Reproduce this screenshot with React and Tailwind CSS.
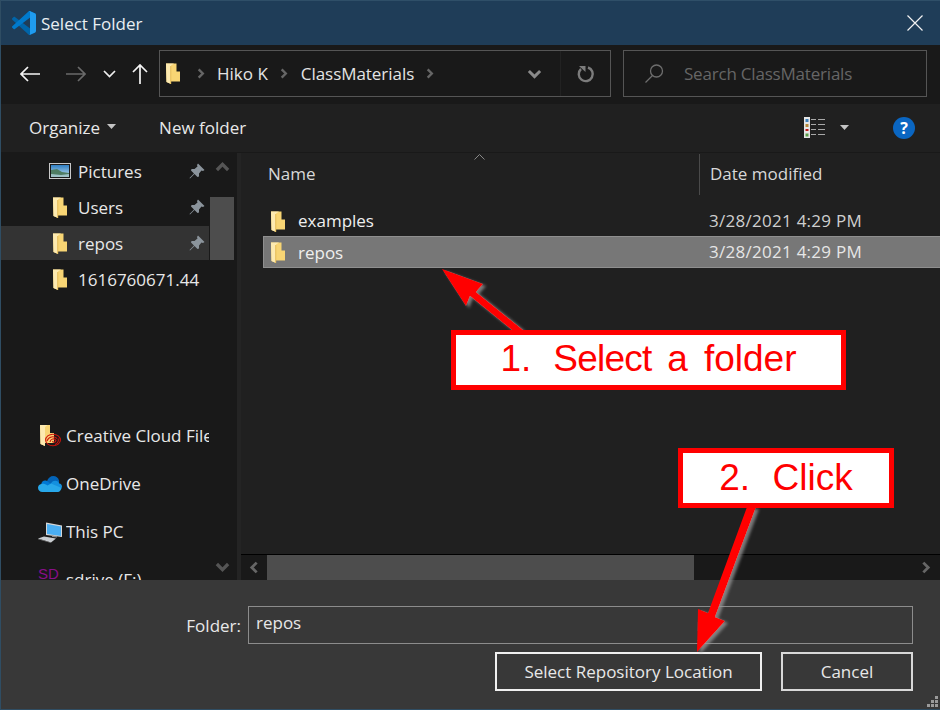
import React from "react";

const FONT = "font-['Open_Sans','Noto_Sans',sans-serif]";

const Folder = ({ className = "" }) => (
    <svg viewBox="0 0 14 21" className={`w-[14px] h-[21px] shrink-0 ${className}`}>
        <path d="M0 0.5H10.5V8.5H14V18.5H5V21L0.5 19Z" fill="#f8d574" />
        <path d="M0 0.5H8L5 2.5V21L0.5 19Z" fill="#fdeab0" />
        <path d="M4.3 3H5.2V21H4.3Z" fill="#e2b54a" />
    </svg>
);

const Pin = () => (
    <svg viewBox="0 0 16 16" className="w-4 h-4 shrink-0">
        <path d="M9 0.5 15.5 7 14 8 12.5 7.5 10 10.5 10 13.5 8.5 14 5.5 11 1 15.5 0.5 15 5 10.5 2 7.5 2.5 6 5.5 6 8.5 3.5 8 2Z" fill="#8b949c" />
    </svg>
);

const Chevron = ({ dir = "right", color = "#666", size = 12, stroke = 2.6 }) => {
    const d = {
        right: "M4 1.5 8.5 6 4 10.5",
        left: "M8 1.5 3.5 6 8 10.5",
        up: "M1.5 8 6 3.5 10.5 8",
        down: "M1.5 4 6 8.5 10.5 4",
    }[dir];
    return (
        <svg viewBox="0 0 12 12" style={{ width: size, height: size }} className="shrink-0">
            <path d={d} fill="none" stroke={color} strokeWidth={stroke} />
        </svg>
    );
};

const Caret = ({ color = "#c4c4c4" }) => (
    <svg viewBox="0 0 9 5" className="w-[9px] h-[5px] shrink-0">
        <path d="M0 0H9L4.5 5Z" fill={color} />
    </svg>
);

const VsCodeLogo = () => (
    <svg viewBox="0 0 100 100" className="w-6 h-6 shrink-0">
        <path d="M96.46 89.2 75.86 99.12C73.47 100.27 70.62 99.79 68.75 97.92L1.3 36.42C-.52 34.76-.51 31.91 1.3 30.25L6.81 25.25C8.3 23.9 10.53 23.8 12.13 25.01L93.36 86.63C96.09 88.7 100 86.75 100 83.33V83.57C100 85.97 98.62 88.16 96.46 89.2Z" fill="#0065a9" />
        <path d="M96.46 10.8 75.86.88C73.47-.27 70.62.21 68.75 2.08L1.3 63.58C-.52 65.24-.51 68.09 1.3 69.75L6.81 74.75C8.3 76.1 10.53 76.2 12.13 74.99L93.36 13.37C96.09 11.3 100 13.25 100 16.67V16.43C100 14.03 98.62 11.84 96.46 10.8Z" fill="#007acc" />
        <path d="M75.86 99.13C73.47 100.27 70.62 99.79 68.75 97.92 71.06 100.22 75 98.59 75 95.33V4.67C75 1.41 71.06-.22 68.75 2.08 70.62.21 73.47-.27 75.86.87L96.46 10.78C98.62 11.82 100 14.01 100 16.41V83.59C100 85.99 98.62 88.18 96.46 89.22Z" fill="#1f9cf0" />
    </svg>
);

const PicturesIcon = () => (
    <svg viewBox="0 0 22 16" className="w-[22px] h-4 shrink-0">
        <defs>
            <linearGradient id="sky" x1="0" y1="0" x2="0" y2="1">
                <stop offset="0" stopColor="#2f7fc4" />
                <stop offset="1" stopColor="#c6e2ee" />
            </linearGradient>
        </defs>
        <rect x="0.5" y="0.5" width="21" height="15" fill="#1b1b1b" stroke="#c9c9c9" />
        <rect x="2" y="2" width="18" height="12" fill="url(#sky)" />
        <path d="M2 7 8 6 13 9 20 10V14H2Z" fill="#4f7d63" />
        <path d="M2 11 12 12 20 11V14H2Z" fill="#9ec2c6" />
    </svg>
);

const CreativeCloudIcon = () => (
    <svg viewBox="0 0 21 22" className="w-[21px] h-[22px] shrink-0 ml-[2px]">
        <path d="M0 0H10V8H14V18H5V21L0.5 19Z" fill="#f8d574" />
        <path d="M0 0H7.5L5 2V21L0.5 19Z" fill="#fdeab0" />
        <g fill="none" stroke="#d0140c" strokeWidth="1.1">
            <ellipse cx="13" cy="15" rx="7.4" ry="5.8" />
            <path d="M7 16C8.5 11.5 14 10.5 17 13.5" />
            <path d="M10 17C10.5 13.5 14.5 13 16 15.5 15.8 17.5 13 18 12.5 16" />
            <path d="M18 13.5C19 15.5 18 18.5 15 19.5" />
        </g>
    </svg>
);

const OneDriveIcon = () => (
    <svg viewBox="0 0 24 16" className="w-6 h-4 shrink-0">
        <path d="M9 5.2C10 2 12.5 0 15.3 0 18 0 20.3 1.7 21 4.4L21.2 6.2 13 11 9 8.5Z" fill="#0364b8" />
        <path d="M9 5C6.3 3.6 3.4 5.3 3.3 8.1L8.5 14 14 9Z" fill="#0078d4" />
        <path d="M14.5 5.5C17 4 20.8 4.8 21.2 7.5 23 7.5 24 9 24 10.5 24 11 23.8 11.6 23.5 12L16 14 11.5 9Z" fill="#1490df" />
        <path d="M3.3 8C1.3 8.3 0 10 0 11.8 0 14.2 2 16 4.2 16H20C21.6 16 23 14.2 23.6 12L13 7.5 9.5 9.5C7.5 8 5.3 7.6 3.3 8Z" fill="#28a8ea" />
    </svg>
);

const ThisPcIcon = () => (
    <svg viewBox="0 0 24 21" className="w-6 h-[21px] shrink-0">
        <path d="M8 0.5 24 3.5V15L8 13Z" fill="#d6d6d6" />
        <path d="M9 2 23 4.5V14L9 12Z" fill="#4aaef2" />
        <path d="M14 13.5 19 14V15.5L14 15Z" fill="#8a8a8a" />
        <path d="M0 16.5 6 14.5 18 16.5 13 20.5Z" fill="#c9cdd1" />
        <path d="M0 16.5 13 20.5V21L0 17.3Z" fill="#777" />
    </svg>
);

const ViewIcon = () => (
    <svg viewBox="0 0 21 21" className="w-[21px] h-[21px] shrink-0">
        <rect x="0" y="0" width="6" height="21" fill="#e6e6e6" />
        <rect x="1.5" y="2" width="3" height="3" fill="#3d7fb8" />
        <rect x="1.5" y="7" width="3" height="3" fill="#b58a3a" />
        <rect x="1.5" y="12" width="3" height="2" fill="#c01818" />
        <rect x="1.5" y="16.5" width="3" height="3" fill="#5ca04a" />
        <g stroke="#a8a8a8">
            <path d="M7 2.5H12M14 2.5H21M7 7.5H12M14 7.5H21M7 12.5H12M14 12.5H21M7 17.5H12M14 17.5H21" />
        </g>
    </svg>
);

const NavRow = ({ icon, label, pinned, selected, className = "" }) => (
    <div className={`h-[34px] flex items-center shrink-0 pr-[4px] ${selected ? "bg-[#333333]" : ""} ${className}`}>
        <div className="w-[77px] flex justify-center pl-[45px] pr-[4px] items-center">{icon}</div>
        <span className="flex-1 mt-[2px] text-[#e8e8e8] whitespace-nowrap overflow-hidden">{label}</span>
        {pinned && <Pin />}
    </div>
);

const DriveRow = ({ icon, label, className = "" }) => (
    <div className={`h-[34px] flex items-center shrink-0 pl-[35px] ${className}`}>
        <div className="w-[30px] pl-[2px] flex items-center">{icon}</div>
        <span className="flex-1 text-[#e8e8e8] whitespace-nowrap overflow-hidden">{label}</span>
    </div>
);

const FileRow = ({ name, selected }) => (
    <div className={`h-[32px] flex items-center ml-[22px] ${selected ? "bg-[#777777] border border-[#8f8f8f] border-r-0" : ""}`}>
        <div className={selected ? "pl-[7px]" : "pl-[8px]"}>
            <Folder />
        </div>
        <span className={`ml-[13px] w-[411px] text-[#efefef] ${selected ? "mt-[2px]" : ""}`}>{name}</span>
        <span className={`tracking-[0.27px] ${selected ? "text-[#e6e6e6]" : "text-[#cfcfcf]"}`}>3/28/2021 4:29 PM</span>
    </div>
);

const Callout = ({ className = "", children }) => (
    <div className={`absolute bg-white border-[5px] border-[#ff0000] flex items-center justify-center text-[#ff0000] text-[37px] font-['Liberation_Sans',sans-serif] whitespace-pre leading-none ${className}`}>
        {children}
    </div>
);

export default function App() {
    return (
        <div className={`relative w-[940px] h-[710px] overflow-hidden flex flex-col bg-[#383838] border-l border-b border-[#2f4d63] text-[17px] ${FONT}`}>
            {/* title bar */}
            <div className="h-[45px] shrink-0 bg-[#1f3d58] border-t border-[#2f4f68] flex items-center pl-[11px] pr-[17px] text-[#e9eef2]">
                <VsCodeLogo />
                <span className="ml-[5px] mt-[2px] flex-1">Select Folder</span>
                <svg viewBox="0 0 16 16" className="w-4 h-4">
                    <path d="M0.5 0.5 15.5 15.5M15.5 0.5 0.5 15.5" stroke="#f2f2f2" strokeWidth="1.2" />
                </svg>
            </div>

            {/* address bar */}
            <div className="h-[59px] shrink-0 bg-[#191919] flex items-center pl-[19px] pr-[12px] pb-[2px]">
                <svg viewBox="0 0 20 16" className="w-5 h-4 shrink-0">
                    <path d="M8 1 1 8 8 15M1 8H20" fill="none" stroke="#f5f5f5" strokeWidth="1.7" />
                </svg>
                <svg viewBox="0 0 20 16" className="w-5 h-4 shrink-0 ml-[26px]">
                    <path d="M12 1 19 8 12 15M0 8H19" fill="none" stroke="#6a6a6a" strokeWidth="1.7" />
                </svg>
                <svg viewBox="0 0 13 8" className="w-[13px] h-2 shrink-0 ml-[17px]">
                    <path d="M1 1 6.5 6.5 12 1" fill="none" stroke="#eeeeee" strokeWidth="1.7" />
                </svg>
                <svg viewBox="0 0 16 20" className="w-4 h-5 shrink-0 ml-[16px]">
                    <path d="M1 8 8 1 15 8M8 1V20" fill="none" stroke="#f5f5f5" strokeWidth="1.7" />
                </svg>
                <div className="ml-[11px] w-[452px] h-[47px] border border-[#555555] flex items-center">
                    <Folder className="ml-[6px]" />
                    <div className="ml-[15px]"><Chevron color="#666666" size={11} /></div>
                    <span className="ml-[11px] text-[#e4e4e4]">Hiko K</span>
                    <div className="ml-[10px]"><Chevron color="#666666" size={11} /></div>
                    <span className="ml-[12px] text-[#e4e4e4] tracking-[-0.05px]">ClassMaterials</span>
                    <div className="ml-[10px]"><Chevron color="#666666" size={11} /></div>
                    <div className="ml-auto w-[50px] h-full flex items-center justify-center pr-[1px]">
                        <Chevron dir="down" color="#8a8a8a" size={15} stroke={2.4} />
                    </div>
                    <div className="w-[50px] h-full border-l border-[#222222] flex items-center justify-center">
                        <svg viewBox="0 0 18 18" className="w-[18px] h-[18px]">
                            <path d="M11 2.5A7 7 0 1 1 4 4" fill="none" stroke="#7c7c7c" strokeWidth="2.4" />
                            <path d="M3 1H9.5V7Z" fill="#7c7c7c" transform="translate(-1 0)" />
                        </svg>
                    </div>
                </div>
                <div className="ml-[12px] w-[304px] h-[47px] border border-[#555555] flex items-center">
                    <svg viewBox="0 0 19 19" className="w-[19px] h-[19px] ml-[21px]">
                        <circle cx="11.5" cy="7" r="6" fill="none" stroke="#6e6e6e" strokeWidth="1.3" />
                        <path d="M7.5 11.5 0.5 18.5" stroke="#6e6e6e" strokeWidth="1.3" />
                    </svg>
                    <span className="ml-[20px] text-[#666666] tracking-[-0.2px]">Search ClassMaterials</span>
                </div>
            </div>

            {/* toolbar */}
            <div className="h-[49px] shrink-0 bg-[#202020] border-b border-[#191919] flex items-center pl-[28px] pr-[25px] pb-[1px] text-[#e8e8e8]">
                <span>Organize</span>
                <div className="ml-[7px] mb-[2px]"><Caret /></div>
                <span className="ml-[43px]">New folder</span>
                <div className="ml-auto"><ViewIcon /></div>
                <div className="ml-[15px]"><Caret /></div>
                <div className="ml-[44px] w-[22px] h-[22px] rounded-full bg-[#0a66c2] text-white font-bold text-[16px] flex items-center justify-center leading-none">?</div>
            </div>

            {/* sidebar + file list */}
            <div className="h-[427px] shrink-0 flex overflow-hidden">
                <div className="w-[236px] shrink-0 bg-[#191919] flex overflow-hidden">
                    <div className="w-[208px] shrink-0 flex flex-col pt-[1px]">
                        <NavRow icon={<PicturesIcon />} label="Pictures" pinned className="mb-[2px]" />
                        <NavRow icon={<Folder />} label="Users" pinned className="mb-[2px]" />
                        <NavRow icon={<Folder />} label="repos" pinned selected className="mb-[2px]" />
                        <NavRow icon={<Folder />} label="1616760671.44" />
                        <DriveRow icon={<CreativeCloudIcon />} label="Creative Cloud Files" className="mt-[123px]" />
                        <DriveRow icon={<OneDriveIcon />} label="OneDrive" className="mt-[14px]" />
                        <DriveRow icon={<ThisPcIcon />} label="This PC" className="mt-[14px]" />
                        <DriveRow
                            icon={<span className="text-[#8a0f8a] text-[15px] leading-none font-['Liberation_Sans',sans-serif] -mt-[14px] block">SD</span>}
                            label="sdrive (F:)"
                            className="mt-[14px]"
                        />
                    </div>
                    <div className="w-[24px] ml-[1px] shrink-0 flex flex-col items-center">
                        <div className="h-[44px] pt-[7px] flex justify-center">
                            <Chevron dir="up" color="#555555" size={15} />
                        </div>
                        <div className="w-full h-[63px] bg-[#4d4d4d]" />
                        <div className="mt-auto h-[26px] pb-[2px] flex items-center justify-center">
                            <Chevron dir="down" color="#555555" size={15} />
                        </div>
                    </div>
                </div>
                <div className="w-[4px] shrink-0 bg-[#242424]" />
                <div className="flex-1 bg-[#202020] flex flex-col min-w-0">
                    <div className="h-[42px] shrink-0 relative flex items-center pl-[27px] text-[#d8d8d8]">
                        <span className="w-[431px]">Name</span>
                        <div className="w-px h-[41px] bg-[#4a4a4a]" />
                        <span className="ml-[10px]">Date modified</span>
                        <svg viewBox="0 0 11 6" className="absolute left-[233px] top-[1px] w-[11px] h-[6px]">
                            <path d="M0.5 5.5 5.5 0.5 10.5 5.5" fill="none" stroke="#888888" />
                        </svg>
                    </div>
                    <div className="flex-1 pt-[10px]">
                        <FileRow name="examples" />
                        <div className="-mt-[1px]"><FileRow name="repos" selected /></div>
                    </div>
                    <div className="h-[26px] shrink-0 bg-[#191919] flex relative border-t border-[#000000]">
                        <div className="w-[26px] flex items-center justify-center">
                            <Chevron dir="left" color="#666666" size={13} />
                        </div>
                        <div className="w-[427px] bg-[#4d4d4d]" />
                        <div className="ml-auto w-[26px] flex items-center justify-center mr-[2px]">
                            <Chevron dir="right" color="#666666" size={13} />
                        </div>
                    </div>
                </div>
            </div>

            {/* folder input + buttons */}
            <div className="flex-1 bg-[#383838] pr-[27px] pt-[26px] text-[#e8e8e8]">
                <div className="flex items-center justify-end">
                    <span className="mr-[7px] mt-[2px]">Folder:</span>
                    <div className="w-[665px] h-[38px] border border-[#8c8c8c] pl-[7px] pb-[5px] flex items-center">repos</div>
                </div>
                <div className="flex justify-end mt-[8px] gap-[19px]">
                    <div className="w-[267px] h-[39px] pt-[1px] border-2 border-[#f0f0f0] flex items-center justify-center">Select Repository Location</div>
                    <div className="w-[132px] h-[39px] pt-[1px] border-2 border-[#d8d8d8] flex items-center justify-center">Cancel</div>
                </div>
            </div>

            {/* resize grip */}
            <svg viewBox="0 0 12 12" className="absolute right-[1px] bottom-[1px] w-3 h-3">
                <path d="M8 0H11V3H8ZM4 4H7V7H4ZM8 4H11V7H8ZM0 8H3V11H0ZM4 8H7V11H4ZM8 8H11V11H8Z" fill="#9a9a9a" />
            </svg>

            {/* red annotation arrows */}
            <svg viewBox="0 0 940 710" className="absolute -left-px top-0 w-[940px] h-[710px] pointer-events-none">
                <defs>
                    <filter id="soft" x="-20%" y="-20%" width="140%" height="140%">
                        <feDropShadow dx="3" dy="2" stdDeviation="1.6" floodColor="#9a9a9a" floodOpacity="0.75" />
                    </filter>
                </defs>
                <g filter="url(#soft)" fill="#ff0000">
                    <path d="M442 269 483 284 476 292 523 330 512 330 470 296 466 306Z" />
                    <path d="M747 507 756 507 715 617 725 621 697 652 698 609 708 613Z" />
                </g>
            </svg>

            <Callout className="left-[450px] top-[330px] w-[395px] h-[60px] pb-[3px] [word-spacing:-2.3px]">
                <span className="mr-[6px]">1.  </span>
                <span className="tracking-[-0.8px]">Select</span>
                {"  a  folder"}
            </Callout>
            <Callout className="left-[677px] top-[448px] w-[216px] h-[60px] pb-[2px] [word-spacing:1px]">2.  Click</Callout>
        </div>
    );
}
